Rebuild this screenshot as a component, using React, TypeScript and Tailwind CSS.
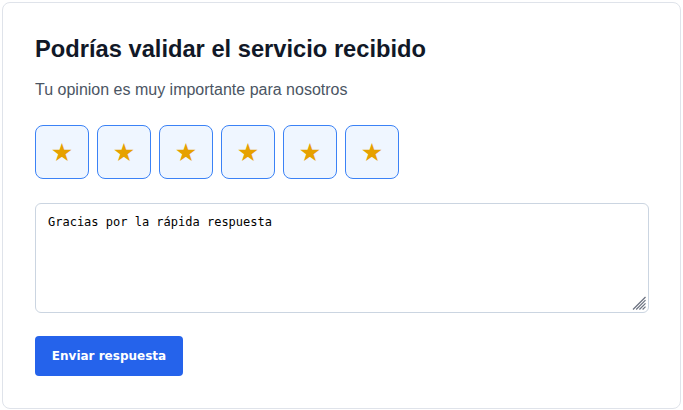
import React from "react";

export default function App() {
  const stars = [1, 2, 3, 4, 5, 6];
  return (
    <div className="p-[2px] bg-white" style={{ fontFamily: '"Liberation Sans", Arial, sans-serif' }}>
      <div className="w-[679px] rounded-lg border border-[#dfe3ea] bg-white p-8">
        <h1 className="text-[23.7px] leading-[28px] font-bold text-[#111827]">
          Podrías validar el servicio recibido
        </h1>
        <p className="mt-[15px] text-[16px] leading-[24px] text-[#4b5563]">
          Tu opinion es muy importante para nosotros
        </p>
        <div className="mt-[23px] flex gap-2">
          {stars.map((s) => (
            <button
              key={s}
              className="flex h-[54px] w-[54px] items-center justify-center rounded-lg border border-[#3b82f6] bg-[#eff6ff] text-[25px] leading-none text-[#e6a100]"
              style={{ fontFamily: '"DejaVu Sans", sans-serif' }}
            >
              ★
            </button>
          ))}
        </div>
        <div className="relative mt-[24px] w-[614px]">
          <textarea
            className="block h-[110px] w-[614px] resize-none rounded-md border border-[#cbd5e1] px-3 py-[10px] text-[12px] leading-[16px] text-black outline-none"
            style={{ fontFamily: '"DejaVu Sans Mono", monospace' }}
            defaultValue="Gracias por la rápida respuesta"
          />
          <svg className="pointer-events-none absolute bottom-[3px] right-[3px]" width="14" height="14" viewBox="0 0 14 14">
            <g stroke="#6b7280" strokeWidth="1.2">
              <line x1="1" y1="13.5" x2="13.5" y2="1" />
              <line x1="4.2" y1="13.5" x2="13.5" y2="4.2" />
              <line x1="7.4" y1="13.5" x2="13.5" y2="7.4" />
              <line x1="10.6" y1="13.5" x2="13.5" y2="10.6" />
            </g>
          </svg>
        </div>
        <button
          className="mt-[23px] flex h-[40px] w-[148px] items-center justify-center rounded bg-[#2563eb] text-[12px] font-bold text-white"
          style={{ fontFamily: '"DejaVu Sans", sans-serif' }}
        >
          Enviar respuesta
        </button>
      </div>
    </div>
  );
}
